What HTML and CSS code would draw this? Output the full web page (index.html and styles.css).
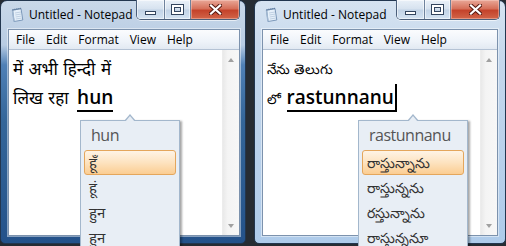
FILE: index.html
```html
<!DOCTYPE html>
<html lang="en">
<head>
<meta charset="utf-8">
<title>Notepad transliteration</title>
<link rel="stylesheet" href="styles.css">
</head>
<body>
<div class="desk">
  <div class="win win-left">
    <div class="titlebar">
      <svg class="app-icon" width="13" height="15" viewBox="0 0 13 15">
        <path d="M1.5 3 L10 1.5 L11.8 13 L3 14.5 Z" fill="#e6f0fa" stroke="#7c98b9"/>
        <path d="M1.5 3 L3 14.5" stroke="#9fb6d0" stroke-width="1.5"/>
        <path d="M4 6 L10 5 M4.3 8 L10.3 7 M4.6 10 L10.6 9 M4.9 12 L10.9 11" stroke="#b5c8dc" stroke-width="0.8"/>
        <path d="M1.5 3 L10 1.5" stroke="#4b6a90" stroke-width="1.6" stroke-dasharray="1 1"/>
      </svg>
      <span class="title">Untitled - Notepad</span>
      <div class="caption">
        <span class="cbtn min"><i></i></span>
        <span class="cbtn max"><i></i></span>
        <span class="cbtn close">
          <svg width="13" height="11" viewBox="0 0 13 11"><path d="M2 1.5 L11 9.5 M11 1.5 L2 9.5" stroke="#5a1d14" stroke-width="4.2" stroke-linecap="square"/><path d="M2 1.5 L11 9.5 M11 1.5 L2 9.5" stroke="#ffffff" stroke-width="2.2" stroke-linecap="square"/></svg>
        </span>
      </div>
    </div>
    <div class="client">
      <div class="menubar"><span>File</span><span>Edit</span><span>Format</span><span>View</span><span>Help</span></div>
      <div class="editor">
        <div class="text hi">
          <div class="line l1">में अभी हिन्दी में</div>
          <div class="line l2">लिख रहा <span class="comp">hun</span></div>
          <div class="suggest s-left">
            <div class="s-body">
              <div class="s-head">hun</div>
              <div class="s-item sel">हूँ</div>
              <div class="s-item">हूं</div>
              <div class="s-item">हुन</div>
              <div class="s-item">हुन</div>
            </div>
          </div>
        </div>
        <div class="scrollbar"><span class="arr up"></span><span class="arr down"></span></div>
      </div>
    </div>
  </div>

  <div class="win win-right">
    <div class="titlebar">
      <svg class="app-icon" width="13" height="15" viewBox="0 0 13 15">
        <path d="M1.5 3 L10 1.5 L11.8 13 L3 14.5 Z" fill="#e6f0fa" stroke="#7c98b9"/>
        <path d="M1.5 3 L3 14.5" stroke="#9fb6d0" stroke-width="1.5"/>
        <path d="M4 6 L10 5 M4.3 8 L10.3 7 M4.6 10 L10.6 9 M4.9 12 L10.9 11" stroke="#b5c8dc" stroke-width="0.8"/>
        <path d="M1.5 3 L10 1.5" stroke="#4b6a90" stroke-width="1.6" stroke-dasharray="1 1"/>
      </svg>
      <span class="title">Untitled - Notepad</span>
      <div class="caption">
        <span class="cbtn min"><i></i></span>
        <span class="cbtn max"><i></i></span>
        <span class="cbtn close">
          <svg width="13" height="11" viewBox="0 0 13 11"><path d="M2 1.5 L11 9.5 M11 1.5 L2 9.5" stroke="#5a1d14" stroke-width="4.2" stroke-linecap="square"/><path d="M2 1.5 L11 9.5 M11 1.5 L2 9.5" stroke="#ffffff" stroke-width="2.2" stroke-linecap="square"/></svg>
        </span>
      </div>
    </div>
    <div class="client">
      <div class="menubar"><span>File</span><span>Edit</span><span>Format</span><span>View</span><span>Help</span></div>
      <div class="editor">
        <div class="text te">
          <div class="line l1">నేను తెలుగు</div>
          <div class="line l2">లో <span class="comp caret">rastunnanu</span></div>
          <div class="suggest s-right">
            <div class="s-body">
              <div class="s-head">rastunnanu</div>
              <div class="s-item sel">రాస్తున్నాను</div>
              <div class="s-item">రాస్తున్నను</div>
              <div class="s-item">రస్తున్నాను</div>
              <div class="s-item">రాస్తున్ననూ</div>
            </div>
          </div>
        </div>
        <div class="scrollbar"><span class="arr up"></span><span class="arr down"></span></div>
      </div>
    </div>
  </div>
</div>
</body>
</html>
```

FILE: styles.css
```css
html, body {
  margin: 0;
  padding: 0;
}
body {
  width: 506px;
  height: 246px;
  overflow: hidden;
  background: #262c33;
  font-family: "Open Sans", "Noto Sans", sans-serif;
}
.desk {
  display: flex;
  gap: 8px;
  height: 246px;
  overflow: hidden;
}
.win {
  box-sizing: border-box;
  height: 244px;
  border: 1px solid #22364f;
  border-radius: 7px 7px 5px 5px;
  padding-bottom: 7px;
  display: flex;
  flex-direction: column;
}
.win-left {
  width: 246px;
  background: linear-gradient(180deg, #c9d8e9 0px, #b8cce3 44px, #4f80b6 64px, #346699 120px, #24528a 100%);
}
.win-right {
  width: 252px;
  background: linear-gradient(180deg, #d6e3f1 0px, #c4d7ec 60px, #aecbea 100%);
}
.titlebar {
  height: 28px;
  display: flex;
  align-items: center;
  padding-left: 10px;
  padding-right: 5px;
  flex: none;
}
.app-icon {
  flex: none;
  margin-top: -1px;
}
.title {
  margin-left: 5px;
  font-size: 12px;
  color: #000;
  margin-top: -2px;
}
.caption {
  margin-left: auto;
  align-self: flex-start;
  display: flex;
  height: 19px;
  margin-top: -1px;
  border: 1px solid #4b5f7a;
  border-top: none;
  border-radius: 0 0 5px 5px;
  overflow: hidden;
  box-shadow: 0 1px 0 rgba(255,255,255,.6);
}
.cbtn {
  display: flex;
  align-items: center;
  justify-content: center;
  height: 100%;
  box-sizing: border-box;
}
.cbtn.min, .cbtn.max {
  background: linear-gradient(180deg, #e9f0f8 0%, #d6e2ef 48%, #c2d3e6 52%, #d4e3f2 100%);
  border-right: 1px solid #6e829c;
  box-shadow: inset 0 0 0 1px rgba(255,255,255,.55);
}
.cbtn.min { width: 28px; }
.cbtn.max { width: 26px; }
.cbtn.close {
  width: 48px;
  background: linear-gradient(180deg, #e9a898 0%, #d6705a 45%, #c4432b 55%, #d26549 100%);
  box-shadow: inset 0 0 0 1px rgba(255,220,210,.4);
}
.cbtn.min i {
  display: block;
  width: 9px;
  height: 2px;
  background: #fff;
  border: 1px solid #33455e;
  margin-top: 6px;
}
.cbtn.max i {
  display: block;
  width: 7px;
  height: 5px;
  border: 2px solid #fff;
  outline: 1px solid #33455e;
  box-shadow: inset 0 0 0 1px #33455e;
}
.client {
  flex: 1;
  margin: 0 5px 0 7px;
  border: 1px solid #7c92ad;
  box-shadow: 0 0 0 1px rgba(255,255,255,.45);
  display: flex;
  flex-direction: column;
  background: #fff;
}
.win-right .client {
  margin: 0 7px 0 7px;
}
.menubar {
  height: 19px;
  border-bottom: 1px solid #b4c2d4;
  background: linear-gradient(180deg, #fbfcfe 0%, #eef3f9 60%, #e2e9f2 100%);
  display: flex;
  align-items: center;
  gap: 11px;
  padding-left: 7px;
  font-size: 12px;
  color: #000;
  flex: none;
}
.editor {
  flex: 1;
  display: flex;
  min-height: 0;
}
.text {
  flex: 1;
  position: relative;
  padding-left: 4px;
  padding-top: 8px;
}
.line {
  white-space: nowrap;
  color: #000;
}
.hi .line {
  font-family: "Noto Sans", sans-serif;
  font-size: 17px;
  word-spacing: 1px;
}
.te .line {
  font-family: "Noto Sans", sans-serif;
  font-size: 13.5px;
}
.l1 {
  height: 22px;
  line-height: 22px;
}
.l2 {
  height: 34px;
  line-height: 34px;
}
.comp {
  font-family: "Open Sans", sans-serif;
  font-size: 19px;
  font-weight: 600;
  word-spacing: 0;
  border-bottom: 2px solid #000;
}
.hi .comp {
  margin-left: 3px;
}
.te .comp {
  margin-left: 2px;
}
.caret {
  border-right: 2px solid #000;
  padding-right: 1px;
}
.scrollbar {
  width: 17px;
  flex: none;
  background: linear-gradient(90deg, #e9e9e9 0%, #f4f4f4 30%, #f7f7f7 100%);
  border-left: 1px solid #ececec;
  display: flex;
  flex-direction: column;
  justify-content: space-between;
  align-items: center;
  padding: 8px 0 7px;
  box-sizing: border-box;
}
.arr {
  width: 0;
  height: 0;
  border-left: 3.5px solid transparent;
  border-right: 3.5px solid transparent;
}
.arr.up { border-bottom: 4px solid #a0a0a0; }
.arr.down { border-top: 4px solid #a0a0a0; }

.suggest {
  position: absolute;
  top: 70px;
  z-index: 5;
}
.suggest::before,
.suggest::after {
  content: "";
  position: absolute;
  left: 50%;
  width: 0;
  height: 0;
  border-left: 6px solid transparent;
  border-right: 6px solid transparent;
  z-index: 2;
}
.suggest::before {
  top: -6px;
  margin-left: -6px;
  border-bottom: 7px solid #a3b7cc;
}
.suggest::after {
  top: -4px;
  margin-left: -5px;
  border-left-width: 5px;
  border-right-width: 5px;
  border-bottom: 6px solid #e8eef5;
}
.s-body {
  box-sizing: border-box;
  height: 126px;
  overflow: hidden;
  background: #e8eef5;
  border: 1px solid #a3b7cc;
  border-bottom: none;
  box-shadow: 2px 1px 2px rgba(0,0,0,.35);
}
.s-left {
  left: 71px;
  width: 100px;
}
.s-right {
  left: 95px;
  width: 110px;
}
.s-head {
  height: 28px;
  line-height: 28px;
  padding-left: 10px;
  font-size: 16px;
  letter-spacing: -0.5px;
  color: #555;
  margin-bottom: 1px;
}
.s-item {
  box-sizing: border-box;
  height: 25px;
  line-height: 23px;
  margin: 0 3px;
  padding-left: 4px;
  border: 1px solid transparent;
  border-radius: 3px;
  color: #333;
  font-family: "Noto Sans", sans-serif;
  font-size: 15px;
  white-space: nowrap;
}
.s-right .s-item {
  font-size: 14px;
}
.s-item.sel {
  border-color: #e4a65c;
  background: linear-gradient(180deg, #fef4e6 0%, #fde3c0 50%, #fbcd92 100%);
}
```
